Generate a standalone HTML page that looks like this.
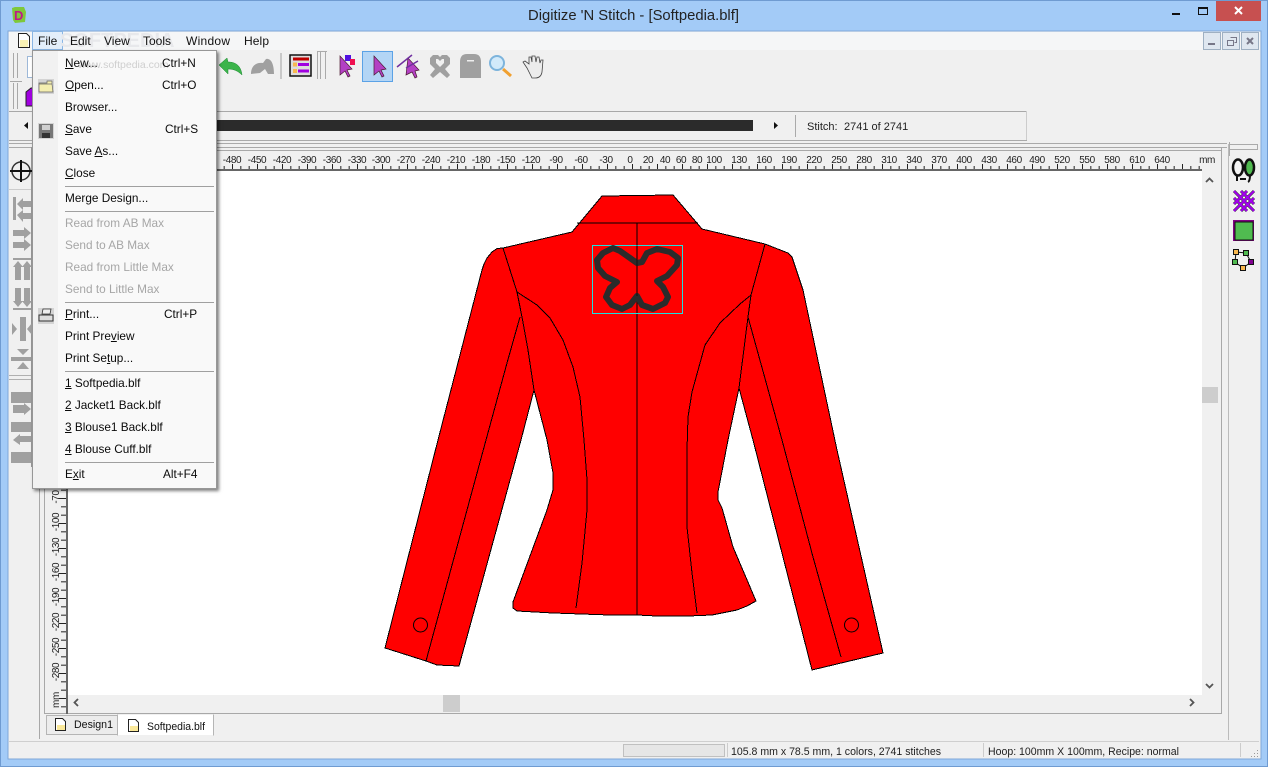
<!DOCTYPE html>
<html><head><meta charset="utf-8"><title>Digitize 'N Stitch</title>
<style>
html,body{margin:0;padding:0;width:1268px;height:767px;overflow:hidden;background:#a3cbf7;font-family:"Liberation Sans",sans-serif}
svg{position:absolute;left:0;top:0}
svg text{font-family:"Liberation Sans",sans-serif}
#menu{position:absolute;left:32px;top:50px;width:183px;height:437px;background:linear-gradient(to right,#f1f1f1 0,#f1f1f1 25px,#f9f9f9 25px);border:1px solid #979797;box-shadow:2px 2px 3px rgba(0,0,0,.5);font-size:11.8px;color:#0a0a0a}
#menu div{position:absolute;left:32px;white-space:nowrap;line-height:14px}
#menu div.g{color:#a6a6a6}
#menu span{position:absolute;white-space:nowrap;line-height:14px}
#menu hr{position:absolute;left:32px;width:149px;margin:0;border:0;height:1px;background:#a0a0a0}
#menu #wm{left:45px;top:7px;font-size:10.5px;color:#cfcfcf;white-space:nowrap;line-height:14px}
</style></head><body>
<svg width="1268" height="767" viewBox="0 0 1268 767">
<defs>
<pattern id="hr" patternUnits="userSpaceOnUse" x="7" y="160" width="25" height="10"><rect x="0" y="4" width="1" height="6" fill="#222"/><rect x="8.33" y="6" width="1" height="4" fill="#222"/><rect x="16.67" y="6" width="1" height="4" fill="#222"/></pattern>
<pattern id="vr" patternUnits="userSpaceOnUse" x="57" y="23" width="10" height="25"><rect x="2" y="0" width="7" height="1" fill="#222"/><rect x="4" y="8.33" width="5" height="1" fill="#222"/><rect x="4" y="16.67" width="5" height="1" fill="#222"/></pattern>
</defs>
<!-- window frame -->
<rect x="0" y="0" width="1268" height="767" fill="#a3cbf7"/>
<rect x="0.5" y="0.5" width="1267" height="766" fill="none" stroke="#6f9bd1"/>
<rect x="8" y="31" width="1253" height="728" fill="#f0f0f0" stroke="#7fa7d8"/>
<rect x="9" y="32" width="1251" height="18" fill="#f5f6f7"/>
<!-- title bar -->
<g transform="translate(10,5)"><path d="M2 3 L5 2 L14 2 L16 7 L15 17 L5 18 L3 15 Z" fill="#7ec83a"/><text x="4" y="15" font-size="13" font-weight="bold" fill="#c0168a">D</text></g>
<text x="633.500" y="20" font-size="14.800" text-anchor="middle" fill="#222">Digitize 'N Stitch - [Softpedia.blf]</text>
<rect x="1172" y="13" width="8" height="2" fill="#111"/>
<rect x="1198.500" y="7.500" width="9" height="7" fill="none" stroke="#111"/><rect x="1198" y="7" width="10" height="2" fill="#111"/>
<rect x="1216" y="1" width="45" height="20" fill="#c75050"/>
<path d="M1235 7l7 7m0-7l-7 7" stroke="#fff" stroke-width="2"/>
<!-- menu bar -->
<rect x="32.500" y="31.500" width="30" height="18" fill="#e3eefa" stroke="#8ab6e4"/>
<path d="M18.500 33.500h8l3 3v11h-11z" fill="#fff" stroke="#222"/><rect x="20" y="40" width="8" height="7" fill="#fbf3b5"/>
<text x="60" y="47" font-size="20" fill="#e7e8eb" font-weight="bold">SOFTPEDIA</text>
<g font-size="12" fill="#111">
<text x="38" y="45">File</text><text x="70" y="45">Edit</text><text x="104" y="45">View</text><text x="143" y="45">Tools</text><text x="186" y="45" textLength="44">Window</text><text x="244" y="45" textLength="25">Help</text>
</g>
<!-- MDI buttons -->
<g fill="#dfe7f0" stroke="#9fb0c2"><rect x="1203.500" y="32.500" width="17" height="17"/><rect x="1222.500" y="32.500" width="17" height="17"/><rect x="1241.500" y="32.500" width="17" height="17"/></g>
<rect x="1208" y="43" width="7" height="2" fill="#778"/>
<path d="M1230.500 37.500h6v5h-2M1227.500 40.500h6v5h-6z" fill="none" stroke="#778"/>
<path d="M1247 38l6 6m0-6l-6 6" stroke="#778" stroke-width="2"/>
<!-- toolbars -->
<g fill="none" stroke="#a8a8a8">
<path d="M13.500 53v25M17.500 53v25M13.500 83v26M17.500 83v26M10 81.500h12"/>
</g>
<rect x="27.500" y="56.500" width="6" height="21" fill="#fff" stroke="#9db8d8"/>
<path d="M26 92l5-4h3v18h-8z" fill="#a000e0" stroke="#222"/>
<!-- undo/redo -->
<path d="M219 65 L227 58 L228 62 C236 62 241 66 242 75 C238 71 234 69 228 69 L228 74Z" fill="#3cb44b" stroke="#1b8a30" stroke-width=".5"/>
<path d="M251 74 C251 66 256 62 263 63 L266 59 C270 58 274 62 274 74 L268 74 L265 69 L260 73 Z" fill="#a0a0a0"/>
<line x1="281" y1="53" x2="281" y2="79" stroke="#a0a0a0"/>
<rect x="290" y="55" width="21" height="21" fill="#ddd" stroke="#111" stroke-width="1.500"/>
<rect x="293" y="57.500" width="16" height="3" fill="#c00000"/><rect x="293" y="62.500" width="4" height="4" fill="#f8b850"/><rect x="298" y="63" width="11" height="3" fill="#a000e0"/><rect x="293" y="69" width="4" height="4" fill="#f8b850"/><rect x="298" y="69.500" width="11" height="3" fill="#a000e0"/>
<path d="M317.500 52v27M320.500 52v27M325.500 52v27M317 51.500h10" fill="none" stroke="#aaa"/>
<!-- cursors -->
<rect x="362.500" y="51.500" width="30" height="30" fill="#b3d5f5" stroke="#5ba2e6"/>
<g fill="#b340c4" stroke="#4a1a30" stroke-width=".7">
<path d="M340 56 L340 75 L345 71 L348 77 L350 76 L347 70 L352 69Z"/>
<path d="M374 56 L374 75 L379 71 L382 77 L384 76 L381 70 L386 69Z"/>
<path d="M408 58 L406 75 L412 72 L415 78 L417 77 L415 71 L419 70Z"/>
</g>
<rect x="345" y="55" width="6" height="6" fill="#5010e0"/><rect x="350" y="59" width="5" height="6" fill="#f01050"/>
<path d="M397 67 L412 55M406 68 L418 61" stroke="#7030a0" stroke-width="1.500"/>
<path fill-rule="evenodd" d="M433 55h5l2 2 2-2h5l3 3v6l-5 5 5 6-3 3-7-6-7 6-3-3 5-6-5-5v-6zM436 59v4l4 4 4-4v-4h-2l-2 2-2-2z" fill="#a0a0a0"/>
<path d="M460 78V62q0-8 7-8h7q7 0 7 8v16z" fill="#a0a0a0"/><rect x="467" y="60" width="7" height="1.500" fill="#eee"/>
<circle cx="497" cy="63" r="7" fill="#d2eafa" stroke="#7db4dc" stroke-width="2"/><path d="M503 69l8 7" stroke="#f0a030" stroke-width="3"/>
<path d="M527 68l-4-6 2-1 4 3v-7h2l1 5v-6h3l1 6 1-5h2l1 6 1-3h2l-1 12q-1 6-7 6h-3z" fill="#ececec" stroke="#444" stroke-width=".8"/>
<!-- toolbar separators -->
<rect x="9" y="111" width="1018" height="1" fill="#a8a8a8"/>
<rect x="1026" y="111" width="1" height="30" fill="#ccc"/>
<rect x="9" y="140" width="1018" height="1" fill="#aaa"/>
<path d="M28 122v7l-4-3.500z" fill="#111"/>
<rect x="217" y="120" width="536" height="11" fill="#2b2b2b"/>
<path d="M774 122v7l4-3.500z" fill="#111"/>
<rect x="795" y="115" width="1" height="22" fill="#aaa"/>
<text x="807" y="130" font-size="11" fill="#222">Stitch:</text><text x="844" y="130" font-size="11" fill="#222">2741 of 2741</text>
<g stroke="#aaa" fill="none"><path d="M9 143.500h1218M9 147.500h1218"/></g>
<!-- left toolbar -->
<rect x="31" y="147" width="1" height="320" fill="#999"/>
<g transform="translate(21,171)"><circle r="9" fill="none" stroke="#333" stroke-width="1.500"/><path d="M-11 0h22M0-11v22" stroke="#111" stroke-width="2"/></g>
<rect x="9" y="189" width="22" height="1" fill="#ccc"/>
<g fill="#a0a0a0">
<rect x="13" y="197" width="3" height="23"/><path d="M17 204l6-6v3h8v6h-8v3zM17 215l6-5v3h8v6h-8v3z"/>
<path d="M31 233l-7-6v3h-11v6h11v3zM31 245l-7-6v3h-11v6h11v3z"/>
<rect x="13" y="258" width="18" height="2"/><path d="M18 261l-5 6h2v13h6v-13h2zM27 261l-5 6h2v13h6v-13h2z"/>
<rect x="13" y="308" width="18" height="2"/><path d="M18 307l-5-6h2v-13h6v13h2zM27 307l-5-6h2v-13h6v13h2z"/>
<rect x="20" y="317" width="6" height="24"/><path d="M12 323v12l5-6zM32 323v12l-5-6z"/>
<path d="M17 349h12l-6 6zM17 369h12l-6-7z"/><rect x="11" y="357" width="20" height="4"/>
<path d="M11 392h20v11h-20zM13 405h11v-2l7 6-7 6v-2h-11z"/>
<path d="M11 422h20v10h-20zM13 440l7-6v2h11v6h-11v3z"/><rect x="11" y="452" width="20" height="11"/>
</g>
<g stroke="#b0b0b0" fill="none"><path d="M9 375.500h22M9 379.500h22"/></g>
<!-- frame -->
<rect x="39" y="147" width="1" height="592" fill="#a8a8a8"/>
<rect x="44.500" y="147.500" width="1177" height="566" fill="#f0f0f0" stroke="#a8a8a8"/>
<rect x="45" y="150" width="1176" height="1" fill="#a8a8a8"/>
<rect x="1228" y="144" width="1" height="596" fill="#bbb"/>
<rect x="9" y="741" width="1250" height="1" fill="#cfcfcf"/>
<!-- canvas -->
<rect x="67" y="170" width="1135" height="525" fill="#fff"/>
<!-- rulers -->
<rect x="217" y="160" width="985" height="10" fill="url(#hr)"/>
<rect x="50" y="169" width="1152" height="2" fill="#666"/>
<rect x="66" y="170" width="2" height="544" fill="#666"/>
<rect x="57" y="488" width="10" height="225" fill="url(#vr)"/>
<g font-size="10" fill="#222" text-anchor="middle" letter-spacing="-.4">
<text x="232" y="163">-480</text><text x="257" y="163">-450</text><text x="282" y="163">-420</text><text x="307" y="163">-390</text><text x="332" y="163">-360</text><text x="357" y="163">-330</text><text x="381" y="163">-300</text><text x="406" y="163">-270</text><text x="431" y="163">-240</text><text x="456" y="163">-210</text><text x="481" y="163">-180</text><text x="506" y="163">-150</text><text x="531" y="163">-120</text><text x="556" y="163">-90</text><text x="581" y="163">-60</text><text x="606" y="163">-30</text><text x="630" y="163">0</text><text x="648" y="163">20</text><text x="665" y="163">40</text><text x="681" y="163">60</text><text x="697" y="163">80</text><text x="714" y="163">100</text><text x="739" y="163">130</text><text x="764" y="163">160</text><text x="789" y="163">190</text><text x="814" y="163">220</text><text x="839" y="163">250</text><text x="864" y="163">280</text><text x="889" y="163">310</text><text x="914" y="163">340</text><text x="939" y="163">370</text><text x="964" y="163">400</text><text x="989" y="163">430</text><text x="1014" y="163">460</text><text x="1037" y="163">490</text><text x="1062" y="163">520</text><text x="1087" y="163">550</text><text x="1112" y="163">580</text><text x="1137" y="163">610</text><text x="1162" y="163">640</text><text x="1207" y="163">mm</text>
<text transform="translate(59,497) rotate(-90)">-70</text><text transform="translate(59,522) rotate(-90)">-100</text><text transform="translate(59,547) rotate(-90)">-130</text><text transform="translate(59,572) rotate(-90)">-160</text><text transform="translate(59,597) rotate(-90)">-190</text><text transform="translate(59,622) rotate(-90)">-220</text><text transform="translate(59,647) rotate(-90)">-250</text><text transform="translate(59,672) rotate(-90)">-280</text><text transform="translate(59,700) rotate(-90)">mm</text>
</g>
<!-- jacket -->
<path d="M602 196 L637 195.500 L673 195 L702 229 L765 244 L788 253 L792 257 L803 290 L837 450 L883 653 L812 670 L753 440 L739 388 L728 440 L718 492 L718 500 L722 508 L733 547 L756 601 L747 606 L737 610 L712 615 L688 616 L657 616 L637 615 L610 615 L553 613 L517 611 L513 608 L513 602 L547 510 L553 490 L553 473 L547 440 L534 390 L521 440 L459 666 L437 665 L426 661 L385 648 L438 440 L482 270 L484 264 L487 258 L492 252 L497 248.500 L503 248 L572 232 Z" fill="#ff0000" stroke="#000" stroke-width="1" shape-rendering="crispEdges"/>
<g fill="none" stroke="#000" stroke-width="1" shape-rendering="crispEdges">
<path d="M577 223H698" />
<path d="M637 223V615"/>
<path d="M503 248 L517 292 L522 317 L528 350 L534 390"/>
<path d="M517 292 L537 305 L550 318 L563 340 L573 367 L580 397 L584 440 L587 480 L587 510 L582 563 L576 608"/>
<path d="M520 317 L507 363 L486 440 L426 661"/>
<path d="M765 244 L751 295 L748 317 L739 388"/>
<path d="M751 295 L740 304 L720 323 L705 345 L692 392 L688 417 L687 450 L687 500 L687 527 L692 573 L697 613"/>
<path d="M748 317 L782 440 L813 557 L841 657"/>
</g>
<g fill="none" stroke="#000" stroke-width="1"><circle cx="420.500" cy="625" r="7"/><circle cx="851.500" cy="625" r="7"/></g>
<rect x="592.500" y="245.500" width="90" height="68" fill="none" stroke="#19e0e0"/>
<path d="M637 263 L630 258 L620 251 L613 248 L603 253 L597 260 L598 268 L605 276 L617 282 L610 288 L606 297 L612 305 L622 309 L630 305 L637 296 L642 305 L653 309 L665 303 L668 297 L663 287 L657 281 L667 276 L677 265 L678 258 L670 252 L657 249 L647 253 L642 262 Z" fill="none" stroke="#2b2b2b" stroke-width="6" stroke-linejoin="round"/>
<path d="M637 223V296" stroke="#000" stroke-width="1" opacity=".6" shape-rendering="crispEdges"/>
<!-- scrollbars -->
<rect x="1202" y="170" width="17" height="525" fill="#f0f0f0"/>
<rect x="68" y="695" width="1151" height="17" fill="#f0f0f0"/>
<rect x="1202" y="387" width="16" height="16" fill="#cdcdcd"/>
<rect x="443" y="695" width="17" height="17" fill="#cdcdcd"/>
<g fill="none" stroke="#555" stroke-width="1.800"><path d="M1206 182l3.500-3.500 3.500 3.500M1206 684l3.500 3.500 3.500-3.500M78 699l-3.500 3.500 3.500 3.500M1190 699l3.500 3.500-3.500 3.500"/></g>
<!-- right toolbar -->
<path d="M1230 144.500h28M1230 149.500h28M1257.500 144v6M1229.500 142v14" stroke="#aaa" fill="none"/>
<ellipse cx="1238" cy="167.500" rx="5" ry="8" fill="#f4f4f4" stroke="#111" stroke-width="2.500"/>
<ellipse cx="1249.500" cy="167.500" rx="4.500" ry="8" fill="#50bb50" stroke="#111" stroke-width="2.500"/>
<path d="M1237 175v6M1250 175q0 6-2 7M1240 179h6" stroke="#111" stroke-width="2" fill="none"/>
<g fill="none" stroke="#222" stroke-width="3"><path d="M1234 191l20 20M1234 198l13 13M1241 191l13 13M1254 191l-20 20M1254 198l-13 13M1247 191l-13 13"/></g>
<g fill="none" stroke="#a400f0" stroke-width="2"><path d="M1234 191l20 20M1234 198l13 13M1241 191l13 13M1254 191l-20 20M1254 198l-13 13M1247 191l-13 13"/></g>
<rect x="1233" y="220" width="21" height="21" fill="#800080"/>
<rect x="1235" y="222" width="18" height="18" fill="#50bb50" stroke="#111"/>
<path d="M1236 252L1246 253L1251 262L1243 268L1235 262Z" fill="none" stroke="#111"/>
<rect x="1233.500" y="249.500" width="5" height="5" fill="#f8b850" stroke="#111"/><rect x="1243.500" y="250.500" width="5" height="5" fill="#50bb50" stroke="#111"/><rect x="1232.500" y="259.500" width="5" height="5" fill="#50bb50" stroke="#111"/><rect x="1248.500" y="259.500" width="5" height="5" fill="#800090" stroke="#111"/><rect x="1240.500" y="265.500" width="5" height="5" fill="#f8b850" stroke="#111"/>
<!-- tabs -->
<path d="M46.500 734.500V715.500H117.500V734.500Z" fill="#ececec" stroke="#b5b5b5"/>
<path d="M117.500 714.500V735.500M213.500 714.500V735.500" stroke="#b5b5b5"/>
<rect x="118" y="715" width="95" height="20" fill="#fff"/>
<path d="M55.500 718.500h7l3 3v9h-10z" fill="#fff" stroke="#222"/><rect x="57" y="725" width="8" height="5" fill="#fbe99a"/>
<path d="M128.500 719.500h7l3 3v9h-10z" fill="#fff" stroke="#222"/><rect x="130" y="726" width="8" height="5" fill="#fbe99a"/>
<text x="74" y="728" font-size="11" fill="#111" textLength="39" lengthAdjust="spacingAndGlyphs">Design1</text>
<text x="147" y="730" font-size="11" fill="#111" textLength="58" lengthAdjust="spacingAndGlyphs">Softpedia.blf</text>
<!-- status bar -->
<rect x="623.500" y="744.500" width="101" height="12" fill="#e6e6e6" stroke="#c0c0c0"/>
<path d="M727.500 743v14M983.500 743v14M1240.500 743v14" stroke="#ccc"/>
<text x="731" y="755" font-size="11" fill="#222" textLength="210" lengthAdjust="spacingAndGlyphs">105.8 mm x 78.5 mm, 1 colors, 2741 stitches</text>
<text x="988" y="755" font-size="11" fill="#222" textLength="191" lengthAdjust="spacingAndGlyphs">Hoop: 100mm X 100mm, Recipe: normal</text>
<path d="M1257 750h1v1h-1zM1257 753h1v1h-1zM1254 753h1v1h-1zM1257 756h1v1h-1zM1254 756h1v1h-1zM1251 756h1v1h-1z" fill="#999"/>
</svg>
<div id="menu">
<div id="wm">www.softpedia.com</div>
<div style="top:5px"><u>N</u>ew...</div><span style="left:129px;top:5px">Ctrl+N</span>
<div style="top:27px"><u>O</u>pen...</div><span style="left:129px;top:27px">Ctrl+O</span>
<div style="top:49px">Browser...</div>
<div style="top:71px"><u>S</u>ave</div><span style="left:132px;top:71px">Ctrl+S</span>
<div style="top:93px">Save <u>A</u>s...</div>
<div style="top:115px"><u>C</u>lose</div>
<hr style="top:135px">
<div style="top:140px">Merge Design...</div>
<hr style="top:160px">
<div class="g" style="top:165px">Read from AB Max</div>
<div class="g" style="top:187px">Send to AB Max</div>
<div class="g" style="top:209px">Read from Little Max</div>
<div class="g" style="top:231px">Send to Little Max</div>
<hr style="top:251px">
<div style="top:256px"><u>P</u>rint...</div><span style="left:131px;top:256px">Ctrl+P</span>
<div style="top:278px">Print Pre<u>v</u>iew</div>
<div style="top:300px">Print Se<u>t</u>up...</div>
<hr style="top:320px">
<div style="top:325px"><u>1</u> Softpedia.blf</div>
<div style="top:347px"><u>2</u> Jacket1 Back.blf</div>
<div style="top:369px"><u>3</u> Blouse1 Back.blf</div>
<div style="top:391px"><u>4</u> Blouse Cuff.blf</div>
<hr style="top:411px">
<div style="top:416px">E<u>x</u>it</div><span style="left:130px;top:416px">Alt+F4</span>
<svg width="25" height="437" viewBox="0 0 25 437" style="left:0;top:0">
<rect x="5" y="28" width="16" height="15" fill="#d4d4d4"/>
<path d="M6 32h8v-2h5v3h-13zM6 33h13l1 8h-14z" fill="#f4eeb0" stroke="#666" stroke-width=".7"/>
<rect x="5" y="72" width="16" height="16" fill="#d4d4d4"/>
<path d="M6 73h14v14h-14z" fill="#777"/><rect x="9" y="74" width="8" height="5" fill="#cfcfcf"/><rect x="9" y="82" width="8" height="5" fill="#333"/>
<rect x="5" y="257" width="16" height="16" fill="#d4d4d4"/>
<path d="M10 258h8l-1 5h-8z" fill="#eee" stroke="#333" stroke-width=".8"/><path d="M6 264h14v6h-14z" fill="#ddd" stroke="#333"/>
</svg>
</div>
</body></html>
